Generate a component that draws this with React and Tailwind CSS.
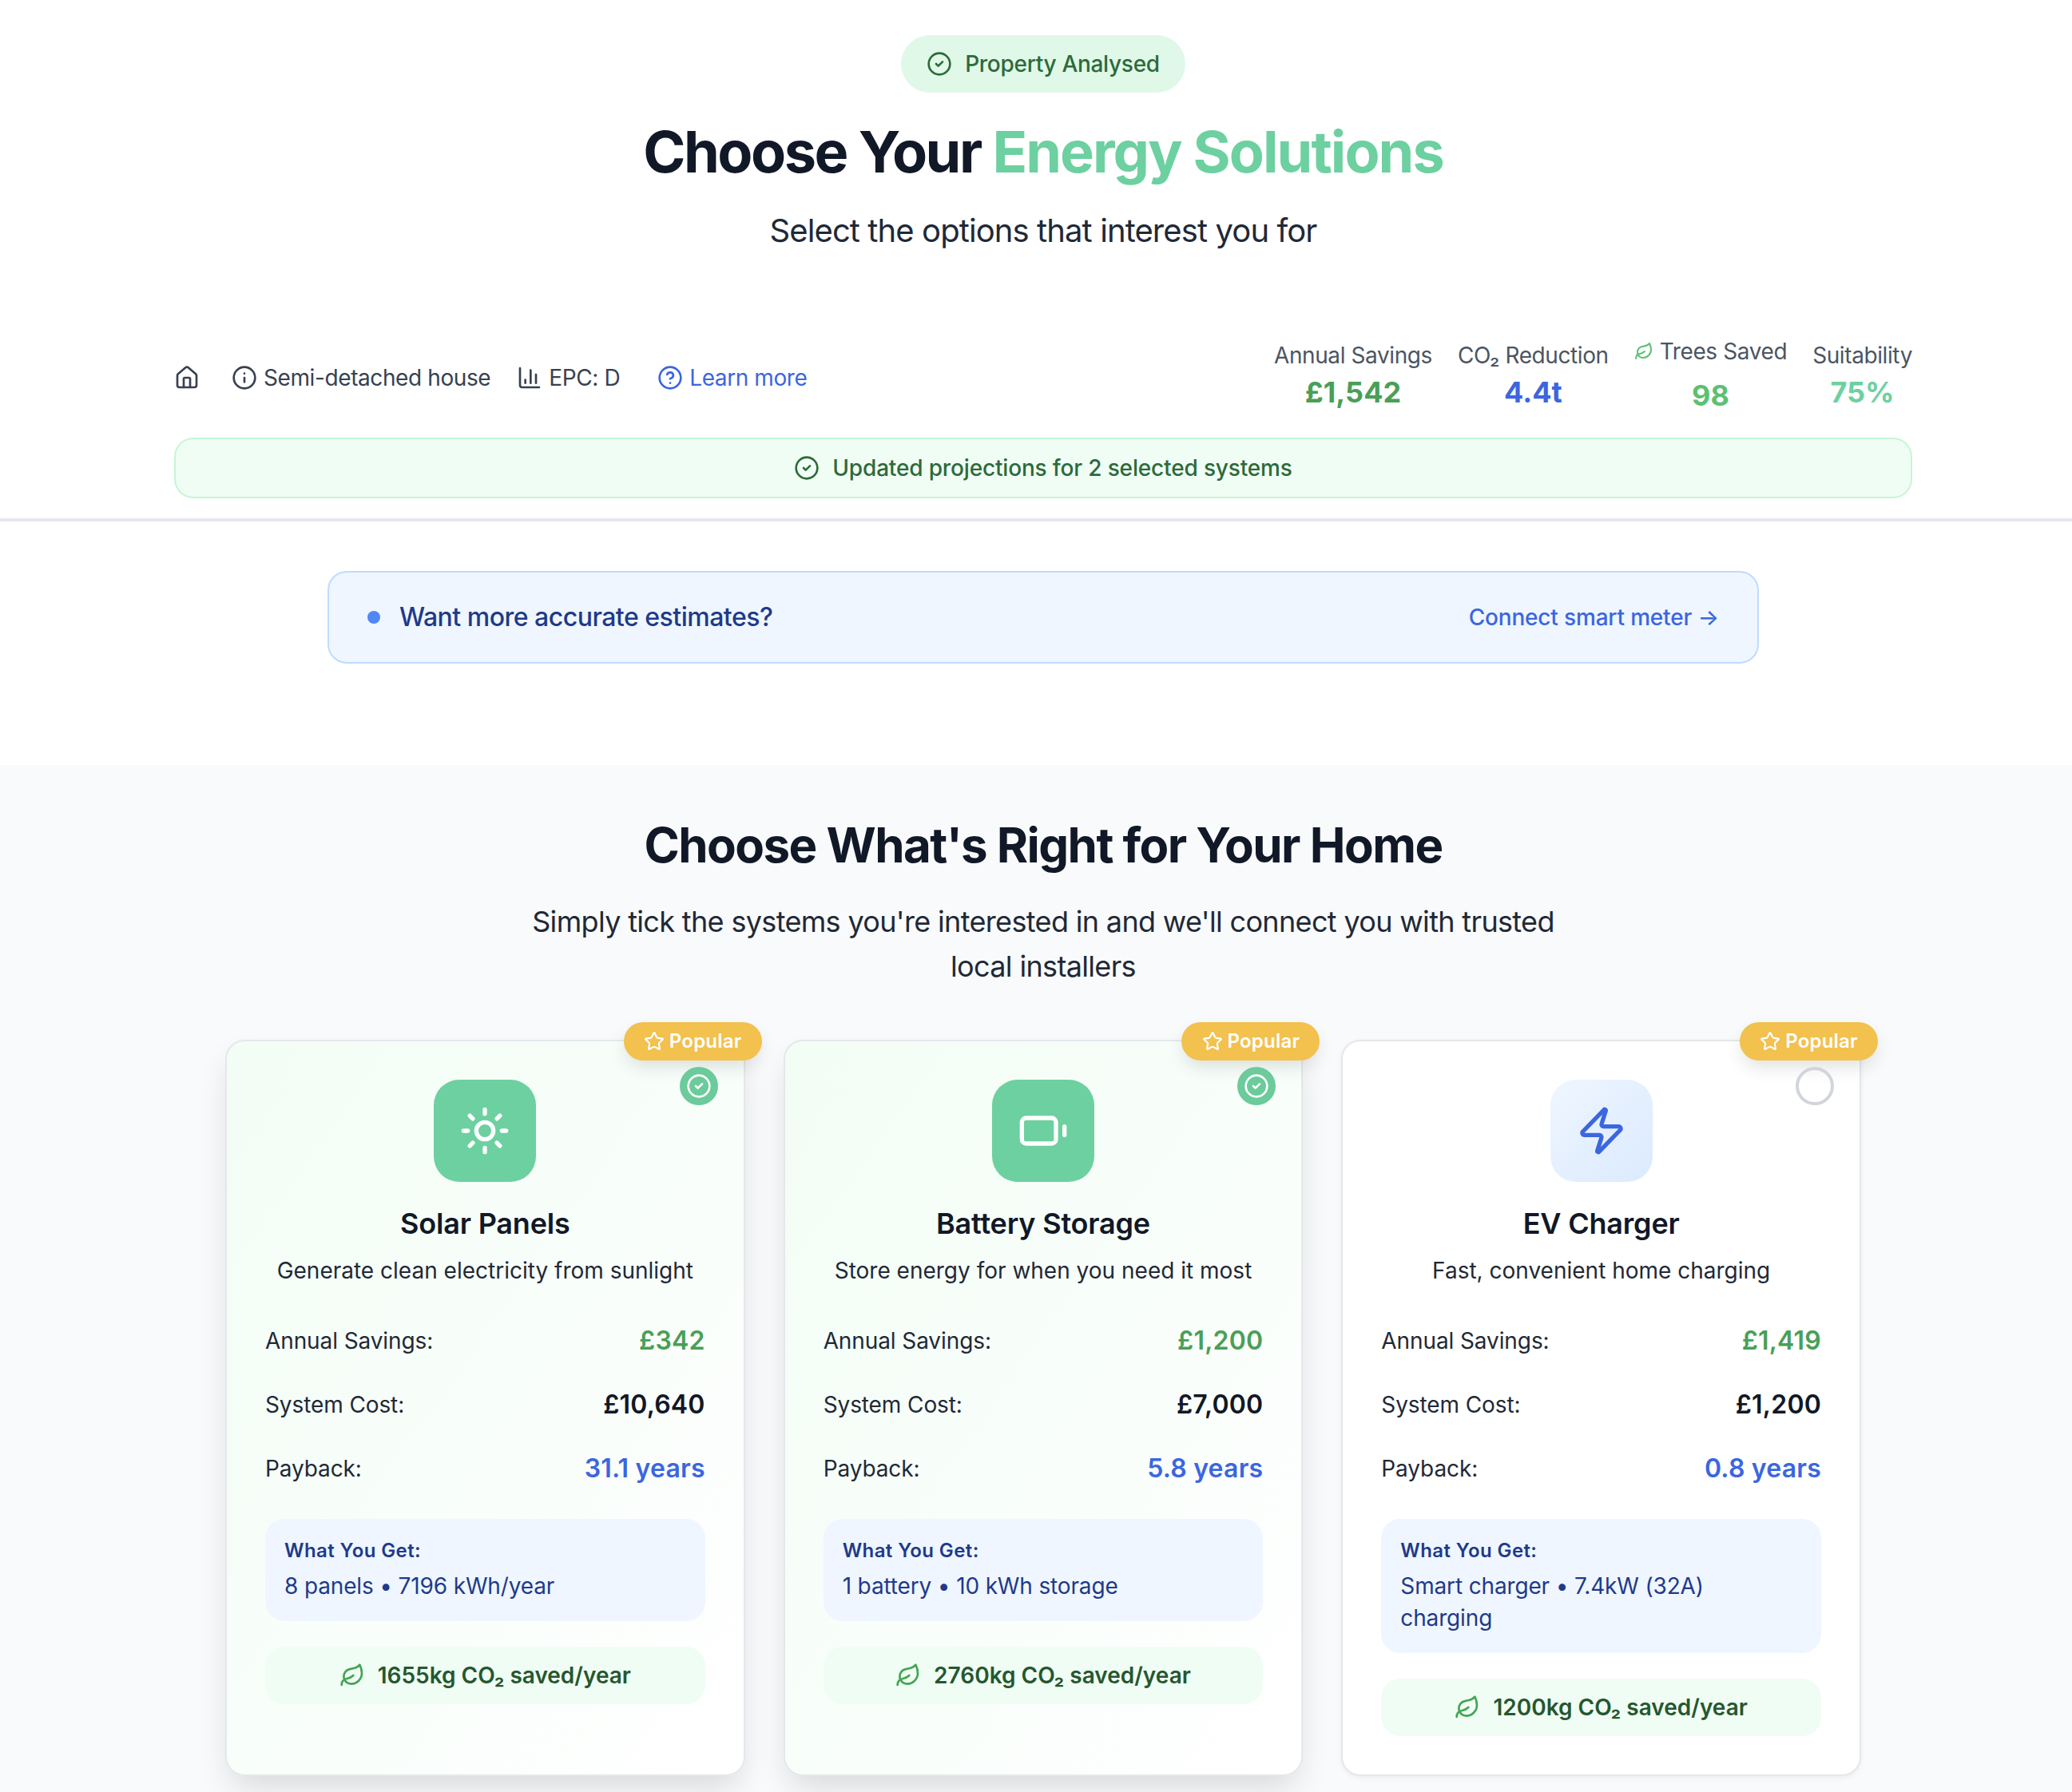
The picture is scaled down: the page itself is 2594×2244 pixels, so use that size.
import { Battery, ChartColumn, CircleCheck, CircleHelp, House, Info, Leaf, Star, Sun, Zap } from 'lucide-react';

const systems = [
    { name: 'Solar Panels', desc: 'Generate clean electricity from sunlight', savings: '£342', cost: '£10,640', payback: '31.1 years', get: '8 panels • 7196 kWh/year', co2: '1655kg CO₂ saved/year', icon: Sun, selected: true },
    { name: 'Battery Storage', desc: 'Store energy for when you need it most', savings: '£1,200', cost: '£7,000', payback: '5.8 years', get: '1 battery • 10 kWh storage', co2: '2760kg CO₂ saved/year', icon: Battery, selected: true },
    { name: 'EV Charger', desc: 'Fast, convenient home charging', savings: '£1,419', cost: '£1,200', payback: '0.8 years', get: 'Smart charger • 7.4kW (32A)\ncharging', co2: '1200kg CO₂ saved/year', icon: Zap, selected: false },
];

const SystemCard = ({ item }) => {
    const Icon = item.icon;
    return (
        <div className={`relative flex flex-col rounded-[24px] border-2 border-[#e5e7eb] p-[48px] ${item.selected ? 'bg-linear-to-br from-[#f2fdf5] to-white shadow-[0_20px_40px_-8px_rgba(0,0,0,0.14)]' : 'bg-white shadow-[0_2px_6px_rgba(0,0,0,0.06)]'}`}>
            <div className="absolute -top-[24px] -right-[23px] flex h-[48px] w-[173px] items-center justify-center gap-[6px] rounded-full bg-[#f2c14e] text-[24px] font-semibold tracking-[0.2px] text-white shadow-[0_10px_24px_-4px_rgba(0,0,0,0.14)]">
                <Star size={26} />
                Popular
            </div>
            {item.selected ? (
                <div className="absolute top-[32px] right-[32px] flex h-[48px] w-[48px] items-center justify-center rounded-full bg-[#6bcb9b]">
                    <CircleCheck size={32} className="text-white" />
                </div>
            ) : (
                <div className="absolute top-[32px] right-[32px] h-[48px] w-[48px] rounded-full border-4 border-[#d1d5db]" />
            )}
            <div className={`mx-auto flex h-[128px] w-[128px] items-center justify-center rounded-[32px] ${item.selected ? 'bg-[#6dd0a0] text-white' : 'bg-linear-to-br from-[#eff6ff] to-[#dbeafe] text-[#3b66e0]'}`}>
                <Icon size={64} />
            </div>
            <h3 className="mt-[24px] text-center text-[36px] leading-[56px] font-semibold tracking-[-0.2px] text-[#111827]">{item.name}</h3>
            <p className="mt-[11px] text-center text-[28px] leading-[40px] text-[#1f2937]">{item.desc}</p>
            <div className="mt-[44px] flex flex-col gap-[32px]">
                <div className="flex h-[48px] items-center justify-between">
                    <span className="text-[28px] tracking-[-0.1px] text-[#1f2937]">Annual Savings:</span>
                    <span className="text-[32px] font-semibold tracking-[0.2px] text-[#4a9f56]">{item.savings}</span>
                </div>
                <div className="flex h-[48px] items-center justify-between">
                    <span className="text-[28px] tracking-[-0.1px] text-[#1f2937]">System Cost:</span>
                    <span className="text-[32px] font-semibold tracking-[0.2px] text-[#111827]">{item.cost}</span>
                </div>
                <div className="flex h-[48px] items-center justify-between">
                    <span className="text-[28px] tracking-[-0.1px] text-[#1f2937]">Payback:</span>
                    <span className="text-[32px] font-semibold tracking-[0.2px] text-[#3b66e0]">{item.payback}</span>
                </div>
            </div>
            <div className="mt-[39px] rounded-[24px] bg-[#eff6ff] p-[24px]">
                <p className="text-[24px] leading-[32px] font-semibold tracking-[0.4px] text-[#1e3a8a]">What You Get:</p>
                <p className="mt-[8px] text-[28px] leading-[40px] tracking-[-0.15px] whitespace-pre-line text-[#1e3a8a]">{item.get}</p>
            </div>
            <div className="mt-[32px] flex h-[72px] items-center justify-center gap-[16px] rounded-[24px] bg-[#f0fdf4] text-[28px] font-semibold text-[#25572f]">
                <Leaf size={32} className="text-[#43a553]" />
                {item.co2}
            </div>
        </div>
    );
};

const Stat = ({ label, value, color, leaf }) => (
    <div className={`flex flex-col items-center ${leaf ? 'gap-[15px] pb-[1px]' : 'gap-[6px]'}`}>
        <div className="flex items-center gap-[8px] text-[28px] leading-[40px] tracking-[-0.4px] text-[#4b5563]">
            {leaf && <Leaf size={24} className="text-[#5cc072]" />}
            {label}
        </div>
        <div className={`text-[36px] leading-[40px] font-bold ${color}`}>{value}</div>
    </div>
);

export default function App() {
    return (
        <div className="h-[2244px] w-[2594px] overflow-hidden bg-white font-['Inter',sans-serif]">
            <div className="h-full w-[2612px]">
                <header className="flex flex-col items-center border-b-4 border-[#e5e7eb] pt-[44px] pb-[25px]">
                    <div className="flex h-[72px] w-[356px] items-center justify-center gap-[16px] rounded-full bg-[#e0f8e8] text-[28px] font-medium tracking-[-0.3px] text-[#2d6a3a]">
                        <CircleCheck size={32} />
                        Property Analysed
                    </div>
                    <h1 className="mt-[34px] text-[72px] leading-[80px] font-bold tracking-[-2.46px] text-[#111827]">
                        Choose Your <span className="tracking-[-1.96px] text-[#6dd0a0]">Energy Solutions</span>
                    </h1>
                    <p className="mt-[31px] text-[40px] leading-[56px] tracking-[-0.9px] text-[#1f2937]">Select the options that interest you for</p>

                    <div className="mt-[103px] flex w-[2176px] items-center justify-between">
                        <div className="flex items-center gap-[33px] pt-[10px] text-[28px] tracking-[-0.4px] text-[#374151]">
                            <House size={32} className="mr-[7px]" />
                            <div className="flex items-center gap-[8px]"><Info size={32} />Semi-detached house</div>
                            <div className="flex items-center gap-[8px]"><ChartColumn size={32} />EPC: D</div>
                            <div className="ml-[14px] flex items-center gap-[8px] text-[#3b66e0]"><CircleHelp size={32} />Learn more</div>
                        </div>
                        <div className="flex items-center gap-[32px]">
                            <Stat label="Annual Savings" value="£1,542" color="text-[#4a9f56]" />
                            <Stat label="CO₂ Reduction" value="4.4t" color="text-[#3b66e0]" />
                            <Stat label="Trees Saved" value="98" color="text-[#5cc072]" leaf />
                            <Stat label="Suitability" value="75%" color="text-[#6dd0a0]" />
                        </div>
                    </div>

                    <div className="mt-[32px] flex h-[76px] w-[2176px] items-center justify-center gap-[16px] rounded-[24px] border-2 border-[#c6f6d5] bg-[#f0fdf4] text-[28px] font-medium tracking-[-0.16px] text-[#2d6a3a]">
                        <CircleCheck size={32} />
                        Updated projections for 2 selected systems
                    </div>
                </header>

                <div className="flex justify-center pt-[62px] pb-[127px]">
                    <div className="flex h-[116px] w-[1792px] items-center justify-between rounded-[24px] border-2 border-[#bfdbfe] bg-[#eff6ff] px-[48px]">
                        <div className="flex items-center gap-[24px]">
                            <span className="h-[16px] w-[16px] rounded-full bg-[#4f87f5]" />
                            <span className="text-[32px] font-medium tracking-[-0.5px] text-[#1e3a8a]">Want more accurate estimates?</span>
                        </div>
                        <span className="text-[28px] font-medium tracking-[-0.17px] text-[#3b66e0]">Connect smart meter →</span>
                    </div>
                </div>

                <section className="flex h-full flex-col items-center bg-[#f9fafb] pt-[64px]">
                    <h2 className="text-[60px] leading-[72px] font-bold tracking-[-1.55px] text-[#111827]">Choose What's Right for Your Home</h2>
                    <p className="mt-[32px] max-w-[1344px] text-center text-[36px] leading-[56px] tracking-[-0.66px] text-[#1f2937]">
                        Simply tick the systems you're interested in and we'll connect you with trusted local installers
                    </p>
                    <div className="mt-[64px] grid w-[2048px] grid-cols-3 gap-[48px]">
                        {systems.map((item) => (
                            <SystemCard key={item.name} item={item} />
                        ))}
                    </div>
                </section>
            </div>
        </div>
    );
}
